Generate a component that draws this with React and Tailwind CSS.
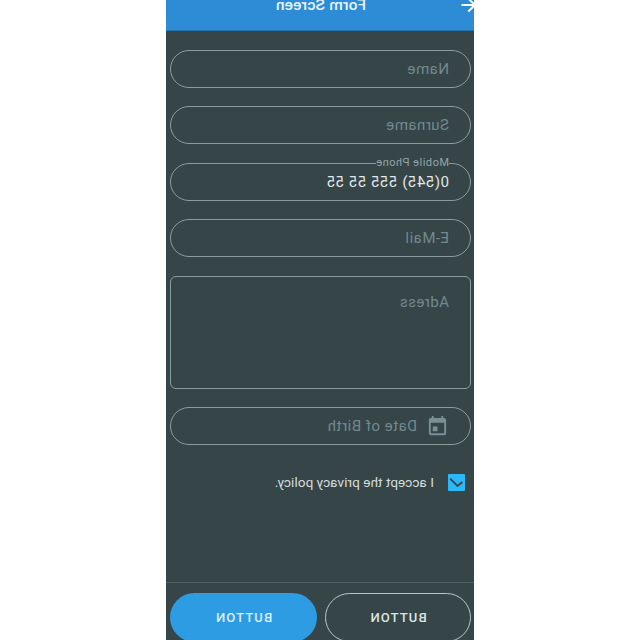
import { MdEvent } from "react-icons/md";

function Field({ children, className = "" }) {
  return (
    <div className={`flex h-[38px] shrink-0 items-center rounded-full border border-[#8c9d9f] pl-[21px] text-[15px] tracking-[0.47px] text-[#718a8e] ${className}`}>
      {children}
    </div>
  );
}

export default function App() {
  return (
    <div className="flex h-[640px] w-[640px] overflow-hidden bg-white pl-[166px] font-['Roboto',sans-serif]">
      <main className="flex h-[640px] w-[308px] -scale-x-100 flex-col overflow-hidden bg-[#364548]">
        <header className="flex h-[31px] shrink-0 items-start border-b border-[#2672ad] bg-[#2e8bd5] text-white">
          <svg viewBox="0 0 16 13" className="h-[13px] w-[16px] shrink-0" fill="none" stroke="currentColor" strokeWidth="2">
            <path d="M12.5 5H-1M5.7-1.5-.8 5l6.5 6.5" />
          </svg>
          <h1 className="-mt-[6px] ml-[92px] text-[15.5px] leading-[22px] font-medium tracking-[0.2px] whitespace-nowrap text-[#e9f5ff]">Form Screen</h1>
        </header>
        <form className="flex flex-col pt-[19px] pr-1 pl-[3px]">
          <Field>Name</Field>
          <Field className="mt-[18px]">Surname</Field>
          <Field className="relative mt-[19px]">
            <span className="absolute -top-[8px] left-[21px] bg-[#364548] text-[11px] leading-[14px] tracking-[0.5px] text-[#91a5a8]">Mobile Phone</span>
            <span className="tracking-[0.52px] text-[#e1e6e6]">0(545) 555 55 55</span>
          </Field>
          <Field className="mt-[18px]">E-Mail</Field>
          <div className="mt-[19px] h-[113px] rounded-[6px] border border-[#8c9d9f] pt-[14px] pl-[21px] text-[15px] leading-[22px] tracking-[0.47px] text-[#718a8e]">Adress</div>
          <Field className="mt-[18px]">
            <MdEvent className="mt-px size-[23px] text-[#799196]" />
            <span className="ml-[9px]">Date of Birth</span>
          </Field>
          <label className="mt-[28px] flex h-[20px] items-center pl-[6px] text-[13.5px] tracking-[0.07px] text-[#d5dddd]">
            <span className="-mt-px flex size-[17px] items-center justify-center rounded-[1px] bg-[#29b8f8]">
              <svg viewBox="0 0 17 17" className="size-[17px]" fill="none" stroke="#364548" strokeWidth="1.8">
                <path d="M2.7 8 7.5 12 14.8 4.7" />
              </svg>
            </span>
            <span className="-mt-px ml-[14px]">I accept the privacy policy.</span>
          </label>
        </form>
        <footer className="mt-auto flex h-[58px] shrink-0 gap-2 border-t border-[#4d6063] pt-[10px] pr-1 pl-[3px] text-[13px] font-medium tracking-[1.1px]">
          <button className="h-[49px] w-[146px] rounded-full border border-[#b8c8c8] text-[#d9e5e5]">BUTTON</button>
          <button className="h-[49px] w-[147px] rounded-full bg-[#2d9ce3] text-[#d9f0ff]">BUTTON</button>
        </footer>
      </main>
    </div>
  );
}
